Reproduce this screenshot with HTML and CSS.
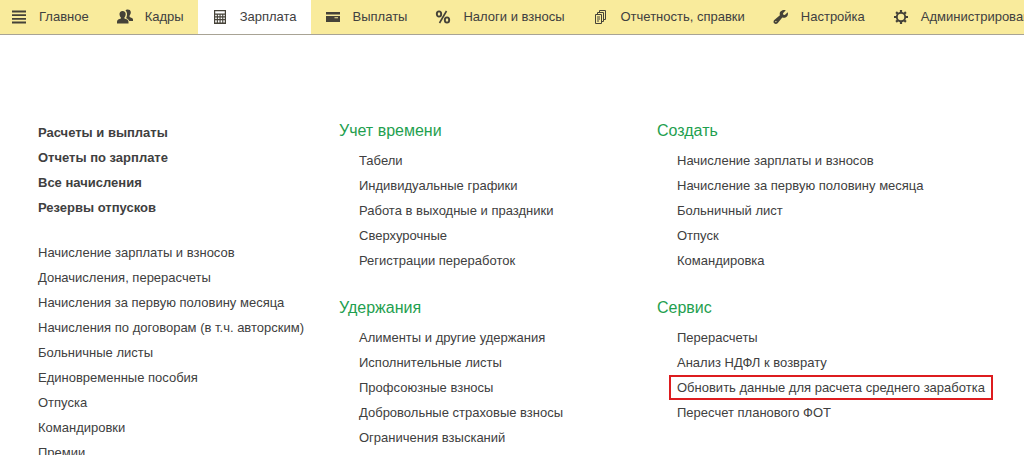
FILE: index.html
```html
<!DOCTYPE html>
<html lang="ru">
<head>
<meta charset="utf-8">
<title>Зарплата</title>
<link rel="stylesheet" href="styles.css">
</head>
<body>
<nav class="sections">
  <a class="section section-first" href="#main"><svg class="icon" viewBox="0 0 16 16"><path d="M1 2.500h14M1 6.100h14M1 9.800h14M1 13.500h14" fill="none" stroke="currentColor" stroke-width="1.800"/></svg>Главное</a>
  <a class="section" href="#staff"><svg class="icon" viewBox="0 0 16 16"><path d="M8.500 1.500C9.400-.1 13.600 0 13.800 3c.1 1.800-.8 3-1.200 3.600v1.400c1.400.5 3.400 1 3.400 2.600V12h-3.700c-.6-1.600-2-2.300-3.200-2.700 1.300-2.800 1.400-6.200-.6-7.800z" fill="currentColor"/><path d="M5.600 2c2.100 0 3.200 1.400 3.100 3.200-.1 1.500-.7 2.600-1.300 3.200v1.200c2 .6 4.100 1.200 4.100 3.200v1.700H0v-1.700c0-2 2-2.600 3.900-3.200V8.400C3.200 7.800 2.600 6.700 2.500 5.200 2.400 3.400 3.500 2 5.600 2z" fill="currentColor"/></svg>Кадры</a>
  <a class="section section-active" href="#salary" aria-current="page"><svg class="icon" viewBox="0 0 16 16"><path fill="currentColor" fill-rule="evenodd" d="M2 1h12v14H2zM3.200 2.200v2.300h9.600V2.200zM3.200 5.700v1.600h1.600V5.700zm2.700 0v1.600h1.600V5.700zm2.700 0v1.600h1.600V5.700zm2.700 0v1.600h1.500V5.700zM3.200 8.500v1.600h1.600V8.500zm2.700 0v1.600h1.600V8.500zm2.700 0v1.600h1.600V8.500zm2.700 0v1.600h1.500V8.500zM3.200 11.300v2.300h1.600v-2.300zm2.700 0v2.300h1.600v-2.300zm2.700 0v2.300h1.600v-2.300zm2.700 0v2.300h1.500v-2.300z"/></svg>Зарплата</a>
  <a class="section" href="#payments"><svg class="icon" viewBox="0 0 16 16"><path fill="currentColor" fill-rule="evenodd" d="M1 3h14v2.500H1zM1 7h14v6H1zM9.500 8.300v1h3.500v-1z"/></svg>Выплаты</a>
  <a class="section" href="#taxes"><svg class="icon" viewBox="0 0 16 16"><g fill="none" stroke="currentColor"><ellipse cx="4" cy="5" rx="2.200" ry="2.600" stroke-width="1.900"/><ellipse cx="12" cy="11" rx="2.200" ry="2.600" stroke-width="1.900"/><path d="M11.500 2l-7 12" stroke-width="1.600"/></g></svg>Налоги и взносы</a>
  <a class="section" href="#reports"><svg class="icon" viewBox="0 0 16 16"><g fill="none" stroke="currentColor" stroke-width="1"><path d="M2.500 5.500h6v9h-6zM4.500 5V3.500h6v9H9M6.500 3V1.500h6v9H11"/><path d="M4 8h3M4 10h3M4 12h2"/></g></svg>Отчетность, справки</a>
  <a class="section" href="#settings"><svg class="icon" viewBox="0 0 16 16"><path fill="currentColor" fill-rule="evenodd" d="M12.800 1.300L10 4.200l.3 1.500 1.500.3 2.900-2.800c.8 2-.1 4.200-1.800 5.100-1.200.7-2.500.6-3.600.2L4.600 14.200c-1 1-2.500 1-3.400.1-.9-.9-.9-2.400.1-3.400L6.900 6.300C6.500 5 6.600 3.600 7.500 2.500 8.800.9 11 .5 12.800 1.300zM2.900 11.900a.7.7 0 100 1.400.7.7 0 000-1.400z"/></svg>Настройка</a>
  <a class="section" href="#admin"><svg class="icon" viewBox="0 0 16 16"><g fill="none" stroke="currentColor"><circle cx="8" cy="8" r="4.200" stroke-width="1.900"/><path d="M8 1v2.700M8 12.300V15M1 8h2.700M12.300 8H15M3.100 3.100l1.700 1.700M11.200 11.200l1.700 1.700M3.100 12.900l1.700-1.700M11.200 4.800l1.700-1.700" stroke-width="2.200"/></g></svg>Администрирование</a>
</nav>
<main class="menu">
  <div class="column column-main">
    <ul class="links links-primary">
      <li><a href="#">Расчеты и выплаты</a></li>
      <li><a href="#">Отчеты по зарплате</a></li>
      <li><a href="#">Все начисления</a></li>
      <li><a href="#">Резервы отпусков</a></li>
    </ul>
    <ul class="links">
      <li><a href="#">Начисление зарплаты и взносов</a></li>
      <li><a href="#">Доначисления, перерасчеты</a></li>
      <li><a href="#">Начисления за первую половину месяца</a></li>
      <li><a href="#">Начисления по договорам (в т.ч. авторским)</a></li>
      <li><a href="#">Больничные листы</a></li>
      <li><a href="#">Единовременные пособия</a></li>
      <li><a href="#">Отпуска</a></li>
      <li><a href="#">Командировки</a></li>
      <li><a href="#">Премии</a></li>
    </ul>
  </div>
  <div class="column">
    <section class="group">
      <h2>Учет времени</h2>
      <ul class="links">
        <li><a href="#">Табели</a></li>
        <li><a href="#">Индивидуальные графики</a></li>
        <li><a href="#">Работа в выходные и праздники</a></li>
        <li><a href="#">Сверхурочные</a></li>
        <li><a href="#">Регистрации переработок</a></li>
      </ul>
    </section>
    <section class="group">
      <h2>Удержания</h2>
      <ul class="links">
        <li><a href="#">Алименты и другие удержания</a></li>
        <li><a href="#">Исполнительные листы</a></li>
        <li><a href="#">Профсоюзные взносы</a></li>
        <li><a href="#">Добровольные страховые взносы</a></li>
        <li><a href="#">Ограничения взысканий</a></li>
      </ul>
    </section>
  </div>
  <div class="column">
    <section class="group">
      <h2>Создать</h2>
      <ul class="links">
        <li><a href="#">Начисление зарплаты и взносов</a></li>
        <li><a href="#">Начисление за первую половину месяца</a></li>
        <li><a href="#">Больничный лист</a></li>
        <li><a href="#">Отпуск</a></li>
        <li><a href="#">Командировка</a></li>
      </ul>
    </section>
    <section class="group">
      <h2>Сервис</h2>
      <ul class="links">
        <li><a href="#">Перерасчеты</a></li>
        <li><a href="#">Анализ НДФЛ к возврату</a></li>
        <li><a class="highlight" href="#">Обновить данные для расчета среднего заработка</a></li>
        <li><a href="#">Пересчет планового ФОТ</a></li>
      </ul>
    </section>
  </div>
</main>
</body>
</html>
```
FILE: styles.css
```css
* {
  box-sizing: border-box;
}

body {
  margin: 0;
  height: 100vh;
  overflow: hidden;
  background: #fff;
  color: #404040;
  font: 13px/25px "Liberation Sans", Arial, sans-serif;
}

a {
  color: inherit;
  text-decoration: none;
}

.sections {
  display: flex;
  background: #f9eb9c;
  border-bottom: 1px solid #a8a395;
}

.section {
  display: flex;
  flex: none;
  align-items: center;
  gap: 12px;
  padding: 0 14px;
  line-height: 34px;
  white-space: nowrap;
}

.section-first {
  padding-left: 11px;
}

.section-active {
  background: #fff;
}

.icon {
  flex: none;
  width: 16px;
  height: 16px;
  color: #454238;
}

.menu {
  display: grid;
  grid-template-columns: 301fr 318fr 367fr;
  padding: 83px 0 0 38px;
}

.column {
  min-width: 0;
}

.column-main {
  padding-top: 2px;
}

.links {
  margin: 0;
  padding: 0;
  list-style: none;
  white-space: nowrap;
}

.links-primary {
  margin-bottom: 20px;
  font-weight: bold;
}

.links a {
  display: inline-block;
  vertical-align: top;
}

.group {
  margin-bottom: 22px;
}

.group h2 {
  margin: 0 0 5px;
  color: #1fa04f;
  font-size: 16px;
  font-weight: normal;
}

.group .links {
  padding-left: 12px;
}

.group .links a {
  padding: 0 8px;
}

.group .highlight {
  outline: 2px solid #dd1c1f;
  outline-offset: -2px;
}
```
